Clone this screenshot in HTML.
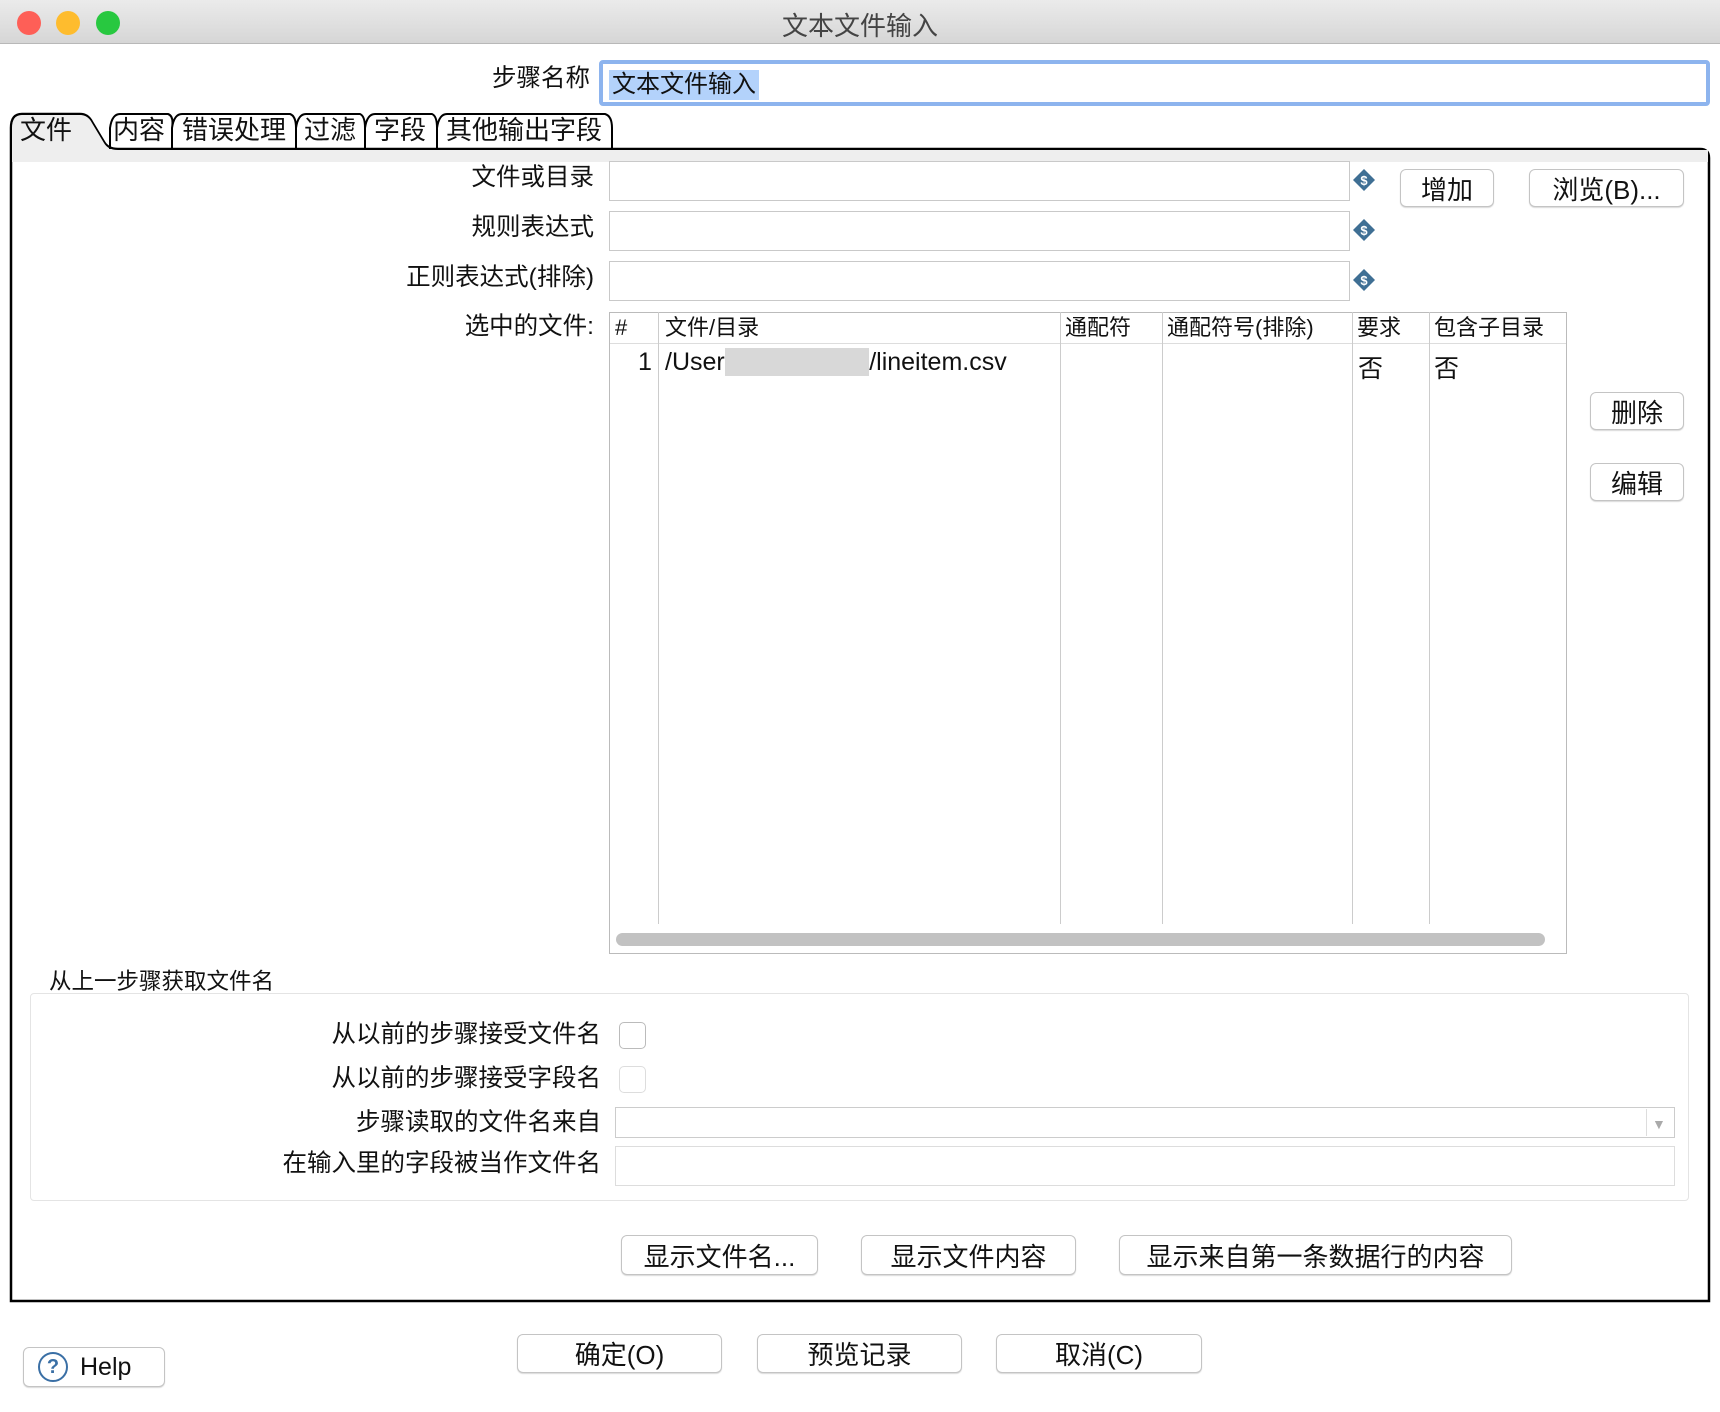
<!DOCTYPE html>
<html><head><meta charset="utf-8"><style>
*{box-sizing:border-box;margin:0;padding:0}
body{width:1720px;height:1412px;background:#fff;font-family:"Liberation Sans","Noto Sans CJK SC",sans-serif;color:#111;position:relative;overflow:hidden}
.a{position:absolute}
.lbl{position:absolute;font-size:24.5px;text-align:right;white-space:nowrap;line-height:1}
.fld{position:absolute;border:1px solid #c9c9c9;background:#fff}
.btn{position:absolute;border:1px solid #c4c4c4;border-radius:6px;background:#fff;box-shadow:0 1px 1px rgba(0,0,0,.15);font-size:26px;display:flex;align-items:center;justify-content:center;white-space:nowrap}
.cb{position:absolute;width:27px;height:27px;border:1px solid #bbb;border-radius:5px;background:#fff}
.th{position:absolute;top:312px;font-size:22px;line-height:31px;white-space:nowrap}
.vl{position:absolute;top:312px;height:612px;width:1px;background:#ccc}
</style></head><body>
<div class="a" style="left:0;top:0;width:1720px;height:44px;background:linear-gradient(#ebebeb,#d6d6d6);border-bottom:1px solid #b8b8b8"></div>
<div class="a" style="left:17px;top:11px;width:24px;height:24px;border-radius:50%;background:#fe5f57"></div>
<div class="a" style="left:56px;top:11px;width:24px;height:24px;border-radius:50%;background:#febc2e"></div>
<div class="a" style="left:96px;top:11px;width:24px;height:24px;border-radius:50%;background:#28c840"></div>
<div class="a" style="left:0;width:1720px;top:6px;text-align:center;font-size:26px;color:#444">文本文件输入</div>

<div class="lbl" style="right:1130px;top:67px">步骤名称</div>
<div class="a" style="left:599px;top:60px;width:1111px;height:46px;border:4px solid #8db4ee;border-radius:4px;background:#fff"></div>
<div class="a" style="left:609px;top:70px;height:30px;padding:0 3px;background:#b3d2fb;font-size:24px;line-height:30px">文本文件输入</div>

<svg class="a" style="left:0;top:108px" width="1720" height="1200">
<path d="M11 1193 L11 20 Q11 6 22 6 L80 6 Q88 6 92 14 L104 34 Q108 41 118 41 L1700 41 Q1709 41 1709 50 L1709 1193 Z" fill="none" stroke="#000" stroke-width="2.5"/>
<rect x="12" y="42" width="1696" height="12" fill="#eee"/>
<path d="M12 42 L12 20 Q12 7 22 7 L80 7 Q88 7 92 15 L104 35 Q108 42 118 42 Z" fill="#eee"/>
<path d="M110 41 L110 20 Q112 6 120 6 L168 6 Q174 8 172 20 L172 41 M172 41 L172 20 Q174 6 182 6 L290 6 Q296 8 296 20 L296 41 M296 41 L296 20 Q298 6 306 6 L360 6 Q365 8 365 20 L365 41 M365 41 L365 20 Q367 6 375 6 L432 6 Q437 8 437 20 L437 41 M437 41 L437 20 Q439 6 447 6 L605 6 Q612 8 612 20 L612 41" fill="none" stroke="#000" stroke-width="2"/>
</svg>
<div class="a" style="left:20px;top:114px;font-size:26px;line-height:32px;white-space:nowrap">文件</div>
<div class="a" style="left:113px;top:114px;font-size:26px;line-height:32px">内容</div>
<div class="a" style="left:182px;top:114px;font-size:26px;line-height:32px">错误处理</div>
<div class="a" style="left:304px;top:114px;font-size:26px;line-height:32px">过滤</div>
<div class="a" style="left:374px;top:114px;font-size:26px;line-height:32px">字段</div>
<div class="a" style="left:446px;top:114px;font-size:26px;line-height:32px">其他输出字段</div>

<div class="lbl" style="right:1126px;top:166px">文件或目录</div>
<div class="lbl" style="right:1126px;top:216px">规则表达式</div>
<div class="lbl" style="right:1126px;top:266px">正则表达式(排除)</div>
<div class="fld" style="left:609px;top:161px;width:741px;height:40px"></div>
<div class="fld" style="left:609px;top:211px;width:741px;height:40px"></div>
<div class="fld" style="left:609px;top:261px;width:741px;height:40px"></div>
<svg class="a" style="left:1352px;top:168px" width="24" height="124">
<g fill="#3f6f94"><path d="M12 1 L23 12 L12 23 L1 12Z"/><path d="M12 51 L23 62 L12 73 L1 62Z"/><path d="M12 101 L23 112 L12 123 L1 112Z"/></g>
<g fill="#fff" font-size="13" font-weight="bold" text-anchor="middle" font-family="Liberation Sans"><text x="12" y="17">$</text><text x="12" y="67">$</text><text x="12" y="117">$</text></g></svg>
<div class="btn" style="left:1400px;top:169px;width:94px;height:38px">增加</div>
<div class="btn" style="left:1529px;top:169px;width:155px;height:38px">浏览(B)...</div>

<div class="lbl" style="right:1126px;top:315px">选中的文件:</div>
<div class="a" style="left:609px;top:312px;width:958px;height:642px;border:1px solid #bbb;background:#fff"></div>
<div class="a" style="left:610px;top:343px;width:956px;height:1px;background:#ddd"></div>
<div class="vl" style="left:658px"></div><div class="vl" style="left:1060px"></div><div class="vl" style="left:1162px"></div><div class="vl" style="left:1352px"></div><div class="vl" style="left:1429px"></div>
<div class="th" style="left:615px">#</div>
<div class="th" style="left:665px">文件/目录</div>
<div class="th" style="left:1065px">通配符</div>
<div class="th" style="left:1167px">通配符号(排除)</div>
<div class="th" style="left:1357px">要求</div>
<div class="th" style="left:1434px">包含子目录</div>
<div class="a" style="left:638px;top:348px;font-size:25px">1</div>
<div class="a" style="left:665px;top:348px;font-size:25px;white-space:nowrap">/User<span style="background:#d8d8d8;color:#d8d8d8">s/xxxxxxxxxx</span>/lineitem.csv</div>
<div class="a" style="left:1358px;top:349px;font-size:25px">否</div>
<div class="a" style="left:1434px;top:349px;font-size:25px">否</div>
<div class="a" style="left:616px;top:933px;width:929px;height:13px;border-radius:7px;background:#c2c2c2"></div>
<div class="btn" style="left:1590px;top:392px;width:94px;height:38px">删除</div>
<div class="btn" style="left:1590px;top:463px;width:94px;height:38px">编辑</div>

<div class="a" style="left:49px;top:964px;font-size:22.5px">从上一步骤获取文件名</div>
<div class="a" style="left:30px;top:993px;width:1659px;height:208px;border:1px solid #e4e4e4;border-radius:4px;background:#fff"></div>
<div class="lbl" style="right:1119px;top:1023px">从以前的步骤接受文件名</div>
<div class="lbl" style="right:1119px;top:1067px">从以前的步骤接受字段名</div>
<div class="lbl" style="right:1119px;top:1111px">步骤读取的文件名来自</div>
<div class="lbl" style="right:1119px;top:1152px">在输入里的字段被当作文件名</div>
<div class="cb" style="left:619px;top:1022px"></div>
<div class="cb" style="left:619px;top:1066px;border-color:#ddd"></div>
<div class="fld" style="left:615px;top:1107px;width:1060px;height:31px;border-color:#ccc"></div>
<div class="a" style="left:1646px;top:1109px;width:1px;height:27px;background:#ddd"></div>
<div class="a" style="left:1652px;top:1116px;font-size:14px;color:#aaa">▼</div>
<div class="fld" style="left:615px;top:1146px;width:1060px;height:40px;border-color:#ddd"></div>

<div class="btn" style="left:621px;top:1235px;width:197px;height:40px">显示文件名...</div>
<div class="btn" style="left:861px;top:1235px;width:215px;height:40px">显示文件内容</div>
<div class="btn" style="left:1119px;top:1235px;width:393px;height:40px">显示来自第一条数据行的内容</div>

<div class="btn" style="left:23px;top:1347px;width:142px;height:40px;justify-content:flex-start;padding-left:14px;font-size:25px"><span style="display:inline-block;width:30px;height:30px;border:2px solid #3a6fa5;border-radius:50%;color:#3a6fa5;font-size:20px;font-weight:bold;text-align:center;line-height:26px;margin-right:12px">?</span>Help</div>
<div class="btn" style="left:517px;top:1334px;width:205px;height:39px">确定(O)</div>
<div class="btn" style="left:757px;top:1334px;width:205px;height:39px">预览记录</div>
<div class="btn" style="left:996px;top:1334px;width:206px;height:39px">取消(C)</div>
</body></html>
